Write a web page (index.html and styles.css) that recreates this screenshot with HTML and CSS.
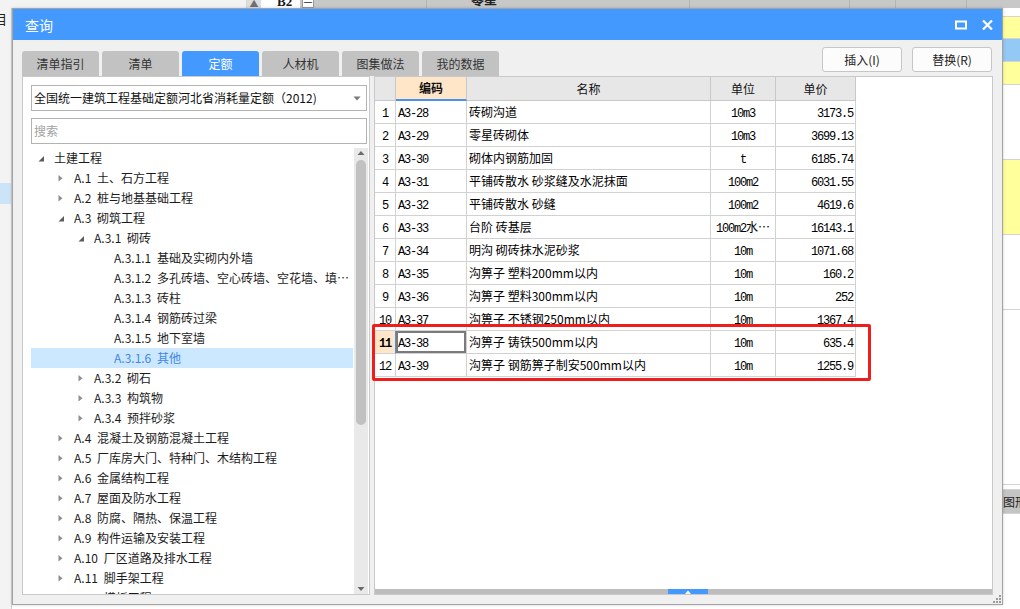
FILE: index.html
```html
<!DOCTYPE html>
<html lang="zh-CN">
<head>
<meta charset="utf-8">
<title>查询</title>
<link rel="stylesheet" href="styles.css">
</head>
<body>
<svg class="defs" width="0" height="0" aria-hidden="true">
  <symbol id="tri-right" viewBox="0 0 12 12"><path d="M3.5 3 L7.5 6.3 L3.5 9.6 Z" fill="#8e8e8e"/></symbol>
  <symbol id="tri-down" viewBox="0 0 12 12"><path d="M9 4 L9 9.5 L3.5 9.5 Z" fill="#5c5c5c"/></symbol>
</svg>

<div class="app">
  <div class="app-top">
    <div class="top-left"></div>
    <div class="top-scroll"><span>▲</span></div>
    <div class="top-white"></div>
    <div class="top-b2"><span>B2</span></div>
    <div class="top-minus"><span>—</span></div>
    <div class="top-head">
      <div class="th-cell w111"></div>
      <div class="th-cell w263"><span class="th-text">零星</span></div>
      <div class="th-cell w160"></div>
      <div class="th-cell w46"></div>
      <div class="th-cell w71"></div>
      <div class="th-cell grow"></div>
    </div>
  </div>
  <div class="app-main">
    <div class="app-left">
      <div class="left-label">目</div>
      <div class="left-sel"></div>
    </div>
    <div class="app-center"></div>
    <div class="app-right">
      <div class="rc h9"></div>
      <div class="rc yellow h22"></div>
      <div class="rc blue h23"></div>
      <div class="rc yellow h23"></div>
      <div class="rc h75"></div>
      <div class="rc yellow h75"></div>
      <div class="rc h75"></div>
      <div class="rc h175"></div>
      <div class="rc h5"></div>
      <div class="rc gray h24">图形</div>
      <div class="rc grow"></div>
    </div>
  </div>
</div>

<div class="dialog">
  <div class="titlebar">
    <span class="title">查询</span>
    <div class="title-icons">
      <svg class="ic-max" width="12" height="10" viewBox="0 0 12 10"><rect x="1" y="1.5" width="10" height="7" fill="none" stroke="#fff" stroke-width="2"/></svg>
      <svg class="ic-close" width="11" height="10" viewBox="0 0 11 10"><path d="M1 0.5 L10 9.5 M10 0.5 L1 9.5" stroke="#fff" stroke-width="2.2"/></svg>
    </div>
  </div>

  <div class="toolbar">
    <div class="tabs">
      <div class="tab">清单指引</div>
      <div class="tab">清单</div>
      <div class="tab active">定额</div>
      <div class="tab">人材机</div>
      <div class="tab">图集做法</div>
      <div class="tab">我的数据</div>
    </div>
    <div class="buttons">
      <button class="btn">插入(I)</button>
      <button class="btn">替换(R)</button>
    </div>
  </div>

  <div class="content">
    <div class="left-panel">
      <div class="select">
        <span class="select-text">全国统一建筑工程基础定额河北省消耗量定额（2012)</span>
        <svg class="select-arrow" width="8" height="5" viewBox="0 0 8 5"><path d="M0.5 0.5 L7.5 0.5 L4 4.5 Z" fill="#7a7a7a"/></svg>
      </div>
      <div class="search">搜索</div>
      <div class="tree-wrap">
        <div class="tree">
          <div class="node l0"><svg class="exp"><use href="#tri-down"/></svg><span class="label">土建工程</span></div>
          <div class="node l1"><svg class="exp"><use href="#tri-right"/></svg><span class="label">A.1 土、石方工程</span></div>
          <div class="node l1"><svg class="exp"><use href="#tri-right"/></svg><span class="label">A.2 桩与地基基础工程</span></div>
          <div class="node l1"><svg class="exp"><use href="#tri-down"/></svg><span class="label">A.3 砌筑工程</span></div>
          <div class="node l2"><svg class="exp"><use href="#tri-down"/></svg><span class="label">A.3.1 砌砖</span></div>
          <div class="node l3"><span class="exp"></span><span class="label">A.3.1.1 基础及实砌内外墙</span></div>
          <div class="node l3"><span class="exp"></span><span class="label">A.3.1.2 多孔砖墙、空心砖墙、空花墙、填充墙</span></div>
          <div class="node l3"><span class="exp"></span><span class="label">A.3.1.3 砖柱</span></div>
          <div class="node l3"><span class="exp"></span><span class="label">A.3.1.4 钢筋砖过梁</span></div>
          <div class="node l3"><span class="exp"></span><span class="label">A.3.1.5 地下室墙</span></div>
          <div class="node l3 selected"><span class="exp"></span><span class="label">A.3.1.6 其他</span></div>
          <div class="node l2"><svg class="exp"><use href="#tri-right"/></svg><span class="label">A.3.2 砌石</span></div>
          <div class="node l2"><svg class="exp"><use href="#tri-right"/></svg><span class="label">A.3.3 构筑物</span></div>
          <div class="node l2"><svg class="exp"><use href="#tri-right"/></svg><span class="label">A.3.4 预拌砂浆</span></div>
          <div class="node l1"><svg class="exp"><use href="#tri-right"/></svg><span class="label">A.4 混凝土及钢筋混凝土工程</span></div>
          <div class="node l1"><svg class="exp"><use href="#tri-right"/></svg><span class="label">A.5 厂库房大门、特种门、木结构工程</span></div>
          <div class="node l1"><svg class="exp"><use href="#tri-right"/></svg><span class="label">A.6 金属结构工程</span></div>
          <div class="node l1"><svg class="exp"><use href="#tri-right"/></svg><span class="label">A.7 屋面及防水工程</span></div>
          <div class="node l1"><svg class="exp"><use href="#tri-right"/></svg><span class="label">A.8 防腐、隔热、保温工程</span></div>
          <div class="node l1"><svg class="exp"><use href="#tri-right"/></svg><span class="label">A.9 构件运输及安装工程</span></div>
          <div class="node l1"><svg class="exp"><use href="#tri-right"/></svg><span class="label">A.10 厂区道路及排水工程</span></div>
          <div class="node l1"><svg class="exp"><use href="#tri-right"/></svg><span class="label">A.11 脚手架工程</span></div>
          <div class="node l1"><svg class="exp"><use href="#tri-right"/></svg><span class="label">A.12 模板工程</span></div>
        </div>
        <div class="vscroll">
          <svg class="vs-arrow" width="14" height="10" viewBox="0 0 14 10"><path d="M3.5 7 L7 3 L10.5 7 Z" fill="#6a6a6a"/></svg>
          <div class="vs-thumb"></div>
          <div class="vs-space"></div>
          <svg class="vs-arrow" width="14" height="10" viewBox="0 0 14 10"><path d="M3.5 3 L10.5 3 L7 7 Z" fill="#6a6a6a"/></svg>
        </div>
      </div>
    </div>

    <div class="right-panel">
      <div class="grid">
        <div class="hc num"></div>
        <div class="hc code">编码</div>
        <div class="hc">名称</div>
        <div class="hc">单位</div>
        <div class="hc">单价</div>

        <div class="c num"><span class="m">1</span></div><div class="c code"><span class="m">A3-28</span></div><div class="c name">砖砌沟道</div><div class="c unit"><span class="m">10m3</span></div><div class="c price"><span class="m">3173.5</span></div>
        <div class="c num"><span class="m">2</span></div><div class="c code"><span class="m">A3-29</span></div><div class="c name">零星砖砌体</div><div class="c unit"><span class="m">10m3</span></div><div class="c price"><span class="m">3699.13</span></div>
        <div class="c num"><span class="m">3</span></div><div class="c code"><span class="m">A3-30</span></div><div class="c name">砌体内钢筋加固</div><div class="c unit"><span class="m">t</span></div><div class="c price"><span class="m">6185.74</span></div>
        <div class="c num"><span class="m">4</span></div><div class="c code"><span class="m">A3-31</span></div><div class="c name">平铺砖散水 砂浆缝及水泥抹面</div><div class="c unit"><span class="m">100m2</span></div><div class="c price"><span class="m">6031.55</span></div>
        <div class="c num"><span class="m">5</span></div><div class="c code"><span class="m">A3-32</span></div><div class="c name">平铺砖散水 砂缝</div><div class="c unit"><span class="m">100m2</span></div><div class="c price"><span class="m">4619.6</span></div>
        <div class="c num"><span class="m">6</span></div><div class="c code"><span class="m">A3-33</span></div><div class="c name">台阶 砖基层</div><div class="c unit"><span class="m">100m2</span>水…</div><div class="c price"><span class="m">16143.1</span></div>
        <div class="c num"><span class="m">7</span></div><div class="c code"><span class="m">A3-34</span></div><div class="c name">明沟 砌砖抹水泥砂浆</div><div class="c unit"><span class="m">10m</span></div><div class="c price"><span class="m">1071.68</span></div>
        <div class="c num"><span class="m">8</span></div><div class="c code"><span class="m">A3-35</span></div><div class="c name">沟箅子 塑料200mm以内</div><div class="c unit"><span class="m">10m</span></div><div class="c price"><span class="m">160.2</span></div>
        <div class="c num"><span class="m">9</span></div><div class="c code"><span class="m">A3-36</span></div><div class="c name">沟箅子 塑料300mm以内</div><div class="c unit"><span class="m">10m</span></div><div class="c price"><span class="m">252</span></div>
        <div class="c num"><span class="m">10</span></div><div class="c code"><span class="m">A3-37</span></div><div class="c name">沟箅子 不锈钢250mm以内</div><div class="c unit"><span class="m">10m</span></div><div class="c price"><span class="m">1367.4</span></div>
        <div class="c num cur"><span class="m">11</span></div><div class="c code sel"><span class="m">A3-38</span></div><div class="c name">沟箅子 铸铁500mm以内</div><div class="c unit"><span class="m">10m</span></div><div class="c price"><span class="m">635.4</span></div>
        <div class="c num"><span class="m">12</span></div><div class="c code"><span class="m">A3-39</span></div><div class="c name">沟箅子 钢筋箅子制安500mm以内</div><div class="c unit"><span class="m">10m</span></div><div class="c price"><span class="m">1255.9</span></div>
      </div>
      <div class="redbox"></div>
      <div class="grid-space"></div>
      <div class="hscroll"><div class="hs-thumb"><svg width="8" height="4" viewBox="0 0 8 4"><path d="M1 4 L4 0.5 L7 4 Z" fill="#fff"/></svg></div></div>
    </div>
  </div>

  <div class="statusbar">
    <svg class="grip" width="8" height="8" viewBox="0 0 8 8">
      <rect x="6" y="0" width="2" height="2" fill="#9a9a9a"/>
      <rect x="3" y="3" width="2" height="2" fill="#9a9a9a"/>
      <rect x="6" y="3" width="2" height="2" fill="#9a9a9a"/>
      <rect x="0" y="6" width="2" height="2" fill="#9a9a9a"/>
      <rect x="3" y="6" width="2" height="2" fill="#9a9a9a"/>
      <rect x="6" y="6" width="2" height="2" fill="#9a9a9a"/>
    </svg>
  </div>
</div>
</body>
</html>
```

FILE: styles.css
```css
* { box-sizing: border-box; }
html, body { margin: 0; padding: 0; }
body {
  width: 1020px;
  height: 609px;
  overflow: hidden;
  position: relative;
  background: #f3f3f3;
  font-family: "Noto Sans CJK SC", "Noto Sans", sans-serif;
  font-size: 12px;
  color: #1b1b1b;
}
.defs { position: absolute; width: 0; height: 0; }

/* ---------- background application ---------- */
.app { display: flex; flex-direction: column; height: 609px; }
.app-top { height: 8px; display: flex; overflow: hidden; background: #c8c8c8; }
.top-left { width: 247px; background: #f3f3f3; border-right: 1px solid #d6d6d6; }
.top-scroll { width: 14px; background: #dedede; color: #707070; font-size: 9px; line-height: 8px; text-align: center; overflow: hidden; }
.top-white { width: 15px; background: #ffffff; }
.top-b2 { width: 24px; background: #ffffff; overflow: hidden; }
.top-b2 span { display: block; margin-top: -6px; line-height: 14px; font: bold 13px "Liberation Serif", serif; padding-left: 1px; }
.top-minus { width: 12px; background: #ffffff; border: 1px solid #9a9a9a; border-top: 0; margin: 0 2px 0 2px; overflow: hidden; }
.top-minus span { display: block; margin-top: -5px; line-height: 12px; font-size: 10px; text-align: center; }
.top-head { flex: 1; display: flex; background: #c8c8c8; }
.th-cell { border-right: 1px solid #b4b4b4; overflow: hidden; }
.th-cell.w111 { width: 111px; }
.th-cell.w263 { width: 263px; padding-left: 44px; }
.th-cell.w160 { width: 160px; }
.th-cell.w46 { width: 46px; }
.th-cell.w71 { width: 71px; }
.th-cell.grow { flex: 1; border-right: 0; }
.th-text { display: block; margin-top: -8px; line-height: 14px; font-weight: bold; font-size: 13px; color: #222; }

.app-main { flex: 1; display: flex; }
.app-left { width: 12px; background: #f3f3f3; border-right: 1px solid #d0d0d0; overflow: hidden; }
.left-label { margin-top: 4px; margin-left: -6px; font-size: 13px; line-height: 14px; color: #222; }
.left-sel { margin-top: 157px; height: 21px; background: #cce4f7; }
.app-center { flex: 1; background: #ffffff; }
.app-right { width: 18px; display: flex; flex-direction: column; background: #ffffff; }
.rc { border-bottom: 1px solid #d4d4d4; overflow: hidden; }
.rc.yellow { background: #ffff9c; }
.rc.blue { background: #93c9f4; }
.rc.gray { background: #c4c4c4; font-size: 12px; line-height: 24px; padding-left: 1px; white-space: nowrap; color: #222; }
.h5 { height: 5px; }
.h9 { height: 9px; }
.h22 { height: 22px; }
.h23 { height: 23px; }
.h24 { height: 24px; }
.h75 { height: 75px; }
.h175 { height: 175px; }
.rc.grow { flex: 1; border-bottom: 0; }

/* ---------- dialog ---------- */
.dialog {
  position: absolute;
  left: 12px;
  top: 8px;
  width: 991px;
  height: 597px;
  border: 1px solid #a3a3a3;
  background: #f0f0f0;
  display: flex;
  flex-direction: column;
  box-shadow: 0 0 3px rgba(0, 0, 0, 0.18);
}
.titlebar {
  height: 31px;
  flex: none;
  background: #4499ff;
  display: flex;
  align-items: center;
  justify-content: space-between;
  padding: 0 9px 0 12px;
}
.title { color: #ffffff; font-size: 14px; line-height: 20px; }
.title-icons { display: flex; align-items: center; gap: 15px; }
.title-icons svg { display: block; }

.toolbar {
  height: 36px;
  flex: none;
  display: flex;
  justify-content: space-between;
  padding: 0 10px 0 9px;
}
.tabs { display: flex; align-items: flex-end; gap: 3px; }
.tab {
  width: 77px;
  height: 25px;
  background: #c2c2c2;
  border-radius: 3px 3px 0 0;
  text-align: center;
  line-height: 25px;
  font-size: 12px;
  color: #333333;
}
.tab.active { background: #4499ff; color: #ffffff; }
.buttons { display: flex; gap: 10px; padding-top: 7px; }
.btn {
  width: 80px;
  height: 25px;
  background: #fcfcfc;
  border: 1px solid #c6c6c6;
  border-radius: 3px;
  font-family: "Noto Sans CJK SC", "Noto Sans", sans-serif;
  font-size: 12px;
  line-height: 21px;
  color: #222222;
  padding: 0;
}

.content {
  height: 519px;
  flex: none;
  display: flex;
  gap: 4px;
  padding: 0 9px;
}
.left-panel {
  width: 348px;
  height: 519px;
  background: #ffffff;
  border: 1px solid #c9c9c9;
  display: flex;
  flex-direction: column;
  padding: 8px 1px 0 8px;
}
.select {
  width: 336px;
  height: 26px;
  flex: none;
  border: 1px solid #b3b3b3;
  background: #ffffff;
  display: flex;
  align-items: center;
  justify-content: space-between;
  padding: 0 5px 0 2px;
}
.select-text { font-size: 12px; line-height: 16px; color: #111111; white-space: nowrap; }
.select-arrow { display: block; }
.search {
  width: 336px;
  height: 26px;
  flex: none;
  margin-top: 7px;
  border: 1px solid #b3b3b3;
  background: #ffffff;
  padding-left: 2px;
  font-size: 12px;
  line-height: 24px;
  color: #a2a2a2;
}
.tree-wrap { flex: 1; display: flex; margin-top: 4px; min-height: 0; overflow: hidden; }
.tree { width: 323px; overflow: hidden; }
.node { height: 20px; display: flex; align-items: center; white-space: nowrap; }
.node.l0 { padding-left: 4px; }
.node.l1 { padding-left: 24px; }
.node.l2 { padding-left: 44px; }
.node.l3 { padding-left: 64px; }
.exp { width: 12px; height: 12px; flex: none; display: block; }
.label {
  margin-left: 7px;
  padding-right: 4px;
  font-size: 12px;
  line-height: 20px;
  word-spacing: 3px;
  color: #1b1b1b;
  overflow: hidden;
  text-overflow: ellipsis;
  white-space: nowrap;
}
.node.selected { background: #cce8ff; }
.node.selected .label { color: #3f86e6; }
.vscroll {
  width: 14px;
  margin-left: 1px;
  background: #e9e9e9;
  display: flex;
  flex-direction: column;
  align-items: center;
}
.vs-arrow { display: block; flex: none; }
.vs-thumb { width: 10px; height: 265px; margin-top: 2px; background: #c1c1c1; border-radius: 5px; flex: none; }
.vs-space { flex: 1; }

.right-panel {
  width: 619px;
  height: 519px;
  background: #ffffff;
  border: 1px solid #c9c9c9;
  position: relative;
  display: flex;
  flex-direction: column;
}
.grid {
  display: grid;
  grid-template-columns: 21px 71px 244px 65px 80px;
  grid-auto-rows: 23px;
  grid-template-rows: 24px;
  width: 481px;
}
.hc, .c {
  border-right: 1px solid #d2d2d2;
  border-bottom: 1px solid #d2d2d2;
  white-space: nowrap;
  overflow: hidden;
}
.hc {
  background: #e7e7e7;
  text-align: center;
  font-size: 12px;
  line-height: 23px;
  color: #111111;
  border-color: #c8c8c8;
}
.hc.code { background: #ffe6c9; font-weight: bold; border-bottom: 2px solid #4a92ea; line-height: 22px; }
.c { font-size: 12px; line-height: 22px; color: #000000; }
.m { font-family: "Liberation Mono", "DejaVu Sans Mono", monospace; font-size: 12px; letter-spacing: -1.2px; }
.c.num { text-align: center; background: #ffffff; }
.c.num.cur { background: #ffe6c9; border-right: 1px solid #4a92ea; }
.c.num.cur .m { font-weight: bold; }
.c.code { padding-left: 2px; }
.c.code.sel { box-shadow: inset 0 0 0 2px #7b7b7b; }
.c.name { padding-left: 2px; }
.c.unit { text-align: center; }
.c.price { text-align: right; padding-right: 2px; }

.redbox {
  position: absolute;
  left: -3px;
  top: 247px;
  width: 499px;
  height: 57px;
  border: 3px solid #f01d1d;
  border-radius: 2px;
  pointer-events: none;
}
.grid-space { flex: 1; }
.hscroll { height: 5px; flex: none; background: #bdbdbd; display: flex; }
.hs-thumb { width: 40px; height: 5px; margin-left: 293px; background: #4499ff; display: flex; align-items: flex-end; justify-content: center; }
.hs-thumb svg { display: block; }

.statusbar {
  flex: 1;
  display: flex;
  justify-content: flex-end;
  align-items: flex-end;
  padding: 0 1px 1px 0;
}
.grip { display: block; }
```
